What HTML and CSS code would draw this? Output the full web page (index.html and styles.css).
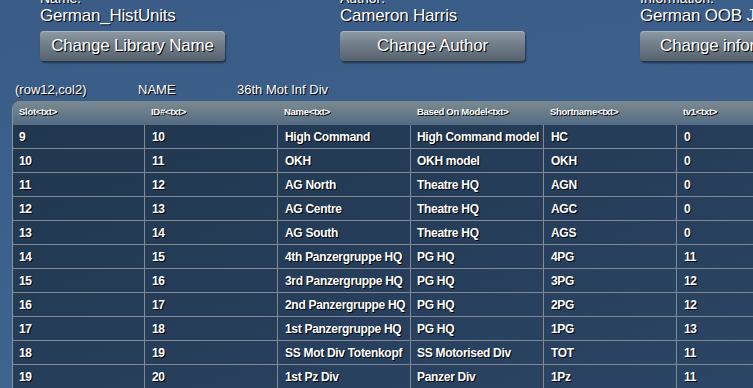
FILE: index.html
```html
<!DOCTYPE html>
<html lang="en">
<head>
    <meta charset="UTF-8">
    <title>Library Editor</title>
    <link rel="stylesheet" href="styles.css">
</head>
<body>
    <div class="info">
        <div class="field">
            <div class="label">Name:</div>
            <div class="value">German_HistUnits</div>
            <button class="button">Change Library Name</button>
        </div>
        <div class="field">
            <div class="label">Author:</div>
            <div class="value">Cameron Harris</div>
            <button class="button">Change Author</button>
        </div>
        <div class="field">
            <div class="label">Information:</div>
            <div class="value">German OOB July 1941</div>
            <button class="button">Change information</button>
        </div>
    </div>

    <div class="selection">
        <span class="sel-pos">(row12,col2)</span>
        <span class="sel-col">NAME</span>
        <span class="sel-val">36th Mot Inf Div</span>
    </div>

    <div class="grid-wrap">
        <table class="grid">
            <colgroup>
                <col><col><col><col><col><col>
            </colgroup>
            <thead>
                <tr>
                    <th>Slot&lt;txt&gt;</th>
                    <th>ID#&lt;txt&gt;</th>
                    <th>Name&lt;txt&gt;</th>
                    <th>Based On Model&lt;txt&gt;</th>
                    <th>Shortname&lt;txt&gt;</th>
                    <th>tv1&lt;txt&gt;</th>
                </tr>
            </thead>
            <tbody>
                <tr><td>9</td><td>10</td><td>High Command</td><td>High Command model</td><td>HC</td><td>0</td></tr>
                <tr><td>10</td><td>11</td><td>OKH</td><td>OKH model</td><td>OKH</td><td>0</td></tr>
                <tr><td>11</td><td>12</td><td>AG North</td><td>Theatre HQ</td><td>AGN</td><td>0</td></tr>
                <tr><td>12</td><td>13</td><td>AG Centre</td><td>Theatre HQ</td><td>AGC</td><td>0</td></tr>
                <tr><td>13</td><td>14</td><td>AG South</td><td>Theatre HQ</td><td>AGS</td><td>0</td></tr>
                <tr><td>14</td><td>15</td><td>4th Panzergruppe HQ</td><td>PG HQ</td><td>4PG</td><td>11</td></tr>
                <tr><td>15</td><td>16</td><td>3rd Panzergruppe HQ</td><td>PG HQ</td><td>3PG</td><td>12</td></tr>
                <tr><td>16</td><td>17</td><td>2nd Panzergruppe HQ</td><td>PG HQ</td><td>2PG</td><td>12</td></tr>
                <tr><td>17</td><td>18</td><td>1st Panzergruppe HQ</td><td>PG HQ</td><td>1PG</td><td>13</td></tr>
                <tr><td>18</td><td>19</td><td>SS Mot Div Totenkopf</td><td>SS Motorised Div</td><td>TOT</td><td>11</td></tr>
                <tr><td>19</td><td>20</td><td>1st Pz Div</td><td>Panzer Div</td><td>1Pz</td><td>11</td></tr>
            </tbody>
        </table>
    </div>
</body>
</html>
```

FILE: styles.css
```css
:root {
    --background: #3b5e88;
    --row: #243b57;
    --line: #808a95;
    --text: #ffffff;
    --shadow: 1px 1px 0 #000000;
}

html, body {
    height: 100%;
}

body {
    margin: 0;
    overflow: hidden;
    font-family: "Liberation Sans", Arial, sans-serif;
    background: linear-gradient(170deg, #3a5c86 0%, #3d628c 60%, #3f6590 100%);
    color: var(--text);
    text-shadow: var(--shadow);
}

.info {
    display: flex;
    margin-top: -10px;
    white-space: nowrap;
}

.field {
    flex: 0 0 300px;
    padding-left: 40px;
    box-sizing: border-box;
}

.label {
    font-size: 14px;
    line-height: 16px;
}

.value {
    font-size: 17px;
    line-height: 20px;
    letter-spacing: -0.2px;
}

.button {
    display: block;
    width: 185px;
    height: 30px;
    margin-top: 5px;
    padding: 0;
    border: none;
    border-radius: 4px;
    background: linear-gradient(to bottom, #8f9ba5 0%, #717e89 45%, #56626d 100%);
    box-shadow: 1px 2px 2px rgba(0, 0, 0, 0.45), inset 0 1px 0 rgba(255, 255, 255, 0.25);
    color: var(--text);
    font-family: "Liberation Sans", Arial, sans-serif;
    font-size: 17px;
    letter-spacing: -0.2px;
    text-shadow: var(--shadow);
    white-space: nowrap;
    overflow: hidden;
    cursor: pointer;
}

.selection {
    display: flex;
    margin-top: 20px;
    padding-left: 15px;
    font-size: 13px;
    line-height: 18px;
    white-space: nowrap;
}

.sel-pos {
    width: 123px;
}

.sel-col {
    width: 99px;
}

.grid-wrap {
    margin: 2px 0 0 12px;
}

.grid {
    width: 798px;
    table-layout: fixed;
    border-collapse: separate;
    border-spacing: 0;
    border-left: 1px solid #8795a2;
    border-top-left-radius: 8px;
    overflow: hidden;
}

.grid col {
    width: 133px;
}

.grid col:first-child {
    width: 132px;
}

.grid th {
    height: 24px;
    padding: 0 6px 4px;
    box-sizing: border-box;
    background: linear-gradient(to bottom, #7a8a92 0%, #6a7d89 45%, #536c85 100%);
    font-size: 9.5px;
    font-weight: bold;
    letter-spacing: -0.3px;
    text-align: left;
    white-space: nowrap;
    overflow: hidden;
}

.grid tbody {
    background: linear-gradient(160deg, #21374f 0%, #263e5a 50%, #2c4666 100%);
}

.grid td {
    height: 24px;
    padding: 0 5px 0 6px;
    box-sizing: border-box;
    border-right: 1px solid var(--line);
    border-bottom: 1px solid var(--line);
    font-size: 12px;
    font-weight: bold;
    letter-spacing: -0.3px;
    white-space: nowrap;
    overflow: hidden;
}

.grid td:nth-child(n+2) {
    padding-left: 7px;
}

.grid td:nth-child(4) {
    padding-left: 6px;
}
```
